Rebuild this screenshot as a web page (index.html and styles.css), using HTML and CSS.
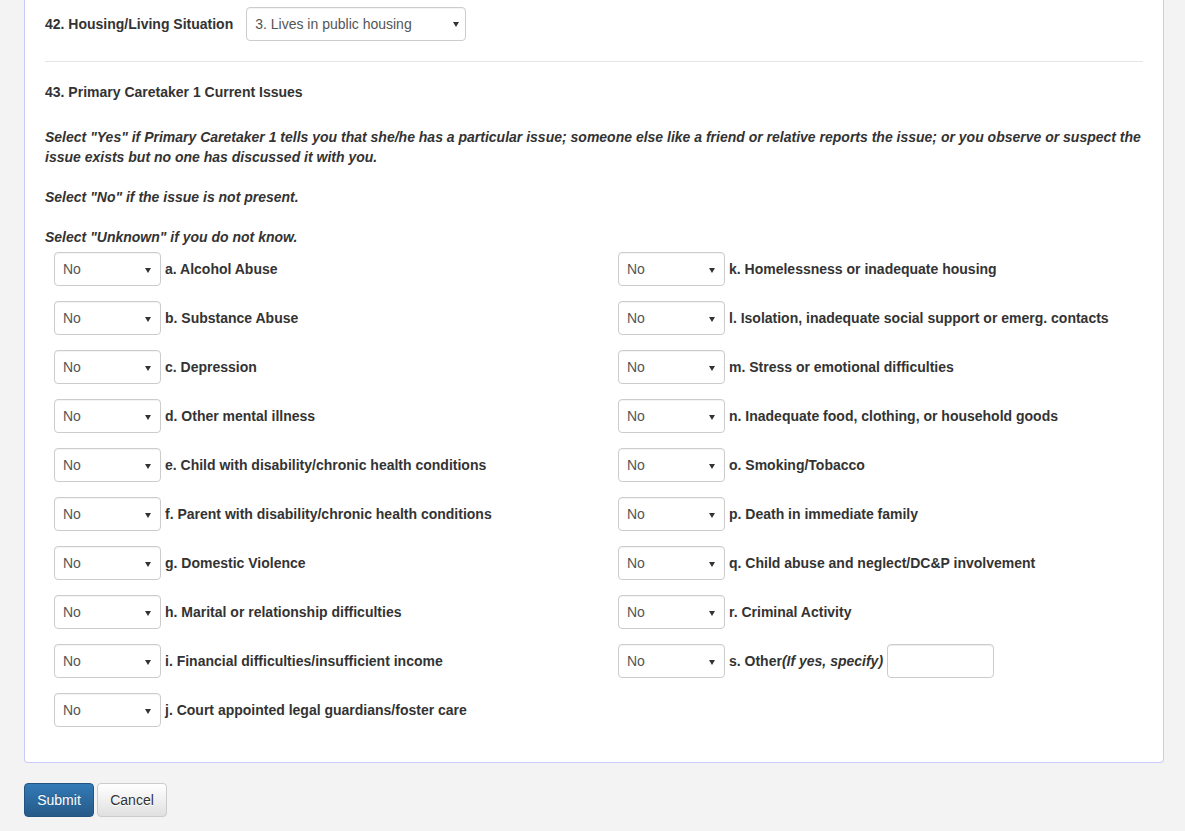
FILE: index.html
```html
<!DOCTYPE html>
<html>
<head>
<meta charset="utf-8">
<link rel="stylesheet" href="styles.css">
</head>
<body>
<div class="page">
  <div class="card">
    <div class="field-row">
      <label class="lbl">42. Housing/Living Situation</label>
      <div class="sel sel-wide"><span>3. Lives in public housing</span><i class="caret"></i></div>
    </div>
    <hr class="divider">
    <div class="title">43. Primary Caretaker 1 Current Issues</div>
    <p class="intro">Select "Yes" if Primary Caretaker 1 tells you that she/he has a particular issue; someone else like a friend or relative reports the issue; or you observe or suspect the issue exists but no one has discussed it with you.<br><br>Select "No" if the issue is not present.<br><br>Select "Unknown" if you do not know.</p>
    <div class="grid">
      <div class="item"><div class="sel"><span>No</span><i class="caret"></i></div><label class="lbl">a. Alcohol Abuse</label></div>
      <div class="item"><div class="sel"><span>No</span><i class="caret"></i></div><label class="lbl">k. Homelessness or inadequate housing</label></div>
      <div class="item"><div class="sel"><span>No</span><i class="caret"></i></div><label class="lbl">b. Substance Abuse</label></div>
      <div class="item"><div class="sel"><span>No</span><i class="caret"></i></div><label class="lbl">l. Isolation, inadequate social support or emerg. contacts</label></div>
      <div class="item"><div class="sel"><span>No</span><i class="caret"></i></div><label class="lbl">c. Depression</label></div>
      <div class="item"><div class="sel"><span>No</span><i class="caret"></i></div><label class="lbl">m. Stress or emotional difficulties</label></div>
      <div class="item"><div class="sel"><span>No</span><i class="caret"></i></div><label class="lbl">d. Other mental illness</label></div>
      <div class="item"><div class="sel"><span>No</span><i class="caret"></i></div><label class="lbl">n. Inadequate food, clothing, or household goods</label></div>
      <div class="item"><div class="sel"><span>No</span><i class="caret"></i></div><label class="lbl">e. Child with disability/chronic health conditions</label></div>
      <div class="item"><div class="sel"><span>No</span><i class="caret"></i></div><label class="lbl">o. Smoking/Tobacco</label></div>
      <div class="item"><div class="sel"><span>No</span><i class="caret"></i></div><label class="lbl">f. Parent with disability/chronic health conditions</label></div>
      <div class="item"><div class="sel"><span>No</span><i class="caret"></i></div><label class="lbl">p. Death in immediate family</label></div>
      <div class="item"><div class="sel"><span>No</span><i class="caret"></i></div><label class="lbl">g. Domestic Violence</label></div>
      <div class="item"><div class="sel"><span>No</span><i class="caret"></i></div><label class="lbl">q. Child abuse and neglect/DC&amp;P involvement</label></div>
      <div class="item"><div class="sel"><span>No</span><i class="caret"></i></div><label class="lbl">h. Marital or relationship difficulties</label></div>
      <div class="item"><div class="sel"><span>No</span><i class="caret"></i></div><label class="lbl">r. Criminal Activity</label></div>
      <div class="item"><div class="sel"><span>No</span><i class="caret"></i></div><label class="lbl">i. Financial difficulties/insufficient income</label></div>
      <div class="item"><div class="sel"><span>No</span><i class="caret"></i></div><label class="lbl">s. Other<em>(If yes, specify)</em></label><div class="txt"></div></div>
      <div class="item"><div class="sel"><span>No</span><i class="caret"></i></div><label class="lbl">j. Court appointed legal guardians/foster care</label></div>
    </div>
  </div>
  <div class="actions">
    <button class="btn btn-primary">Submit</button>
    <button class="btn btn-default">Cancel</button>
  </div>
</div>
</body>
</html>
```

FILE: styles.css
```css
html, body {
  margin: 0;
  padding: 0;
  background: #f3f3f3;
  font-family: "Liberation Sans", Arial, sans-serif;
  font-size: 14px;
  line-height: 20px;
  color: #333;
}
.page {
  padding-left: 24px;
  width: 1140px;
}
.card {
  background: #fff;
  border: 1px solid #c9c9fb;
  border-top: none;
  border-radius: 0 0 4px 4px;
  padding: 7px 20px 35px 20px;
}
.field-row {
  display: flex;
  align-items: center;
  gap: 13px;
}
.lbl {
  font-weight: bold;
  white-space: nowrap;
}
.lbl em {
  font-style: italic;
}
.sel {
  box-sizing: border-box;
  width: 107px;
  height: 34px;
  border: 1px solid #ccc;
  border-radius: 4px;
  background: #fff;
  display: flex;
  align-items: center;
  padding: 0 0 0 8px;
  color: #555;
  position: relative;
  flex: none;
  box-shadow: inset 0 1px 1px rgba(0,0,0,.05);
}
.sel-wide {
  width: 220px;
}
.caret {
  position: absolute;
  right: 9px;
  top: 15px;
  width: 0;
  height: 0;
  border-left: 3px solid transparent;
  border-right: 3px solid transparent;
  border-top: 5px solid #333;
}
.sel-wide .caret {
  right: 6px;
  top: 14px;
}
.divider {
  border: 0;
  border-top: 1px solid #e5e5e5;
  margin: 20px 0;
}
.title {
  font-weight: bold;
}
.intro {
  margin: 25px 0 0 0;
  font-weight: bold;
  font-style: italic;
}
.grid {
  display: grid;
  grid-template-columns: 564px 1fr;
  row-gap: 15px;
  margin-top: 5px;
  padding-left: 9px;
}
.item {
  display: flex;
  align-items: center;
  gap: 4px;
}
.txt {
  box-sizing: border-box;
  width: 107px;
  height: 34px;
  border: 1px solid #ccc;
  border-radius: 4px;
  background: #fff;
  box-shadow: inset 0 1px 1px rgba(0,0,0,.075);
}
.actions {
  display: flex;
  gap: 3px;
  margin-top: 20px;
}
.btn {
  box-sizing: border-box;
  height: 34px;
  width: 70px;
  font-family: "Liberation Sans", Arial, sans-serif;
  font-size: 14px;
  border-radius: 4px;
  padding: 6px 0;
  cursor: pointer;
}
.btn-primary {
  color: #fff;
  background: linear-gradient(to bottom, #337ab7 0, #265a88 100%);
  border: 1px solid #245580;
  text-shadow: 0 -1px 0 rgba(0,0,0,.2);
}
.btn-default {
  color: #333;
  background: linear-gradient(to bottom, #fff 0, #e0e0e0 100%);
  border: 1px solid #ccc;
  text-shadow: 0 1px 0 #fff;
}
```
